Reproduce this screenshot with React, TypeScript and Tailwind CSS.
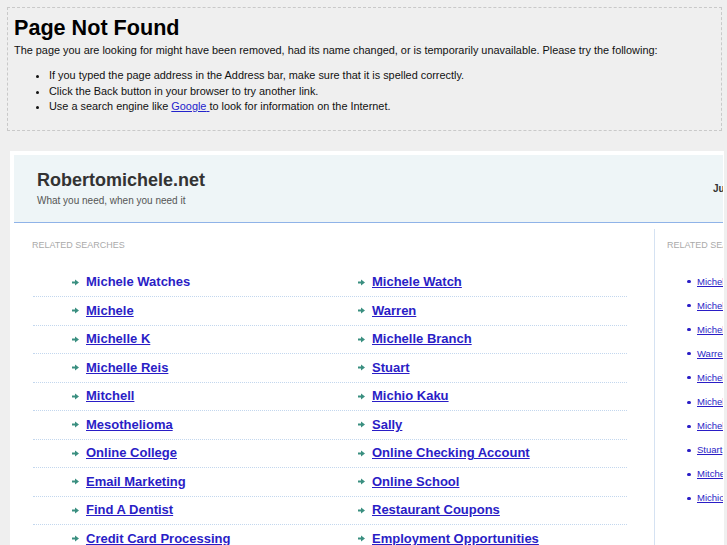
import React from "react";

const leftLinks = [
  "Michele Watches",
  "Michele",
  "Michelle K",
  "Michelle Reis",
  "Mitchell",
  "Mesothelioma",
  "Online College",
  "Email Marketing",
  "Find A Dentist",
  "Credit Card Processing",
];

const rightLinks = [
  "Michele Watch",
  "Warren",
  "Michelle Branch",
  "Stuart",
  "Michio Kaku",
  "Sally",
  "Online Checking Account",
  "Online School",
  "Restaurant Coupons",
  "Employment Opportunities",
];

const sideLinks = [
  "Michele Watches",
  "Michele",
  "Michelle K",
  "Warren",
  "Michelle Reis",
  "Michele Watch",
  "Michelle Branch",
  "Stuart",
  "Mitchell",
  "Michio Kaku",
];

function Arrow() {
  return (
    <svg width="7" height="7" viewBox="0 0 7 7" className="shrink-0">
      <rect x="0" y="2.5" width="4" height="2" fill="#3a8f80" />
      <polygon points="3,0.5 7,3.5 3,6.5" fill="#3a8f80" />
    </svg>
  );
}

function Cell({ text, first }: { text: string; first?: boolean }) {
  return (
    <div className="flex w-[286px] shrink-0 items-center gap-[7px] pl-[39px]">
      <Arrow />
      <a
        href="#"
        className={
          "whitespace-nowrap text-[13px] font-bold leading-[16px] text-[#2a1dc6] " +
          (first ? "no-underline" : "underline")
        }
      >
        {text}
      </a>
    </div>
  );
}

export default function App() {
  return (
    <div className="h-screen overflow-hidden bg-[#efefef] font-['Liberation_Sans',Arial,sans-serif] text-black">
      {/* Error box */}
      <div className="mx-[7px] mt-[7px] w-[715px] border border-dashed border-[#c9c9c9] px-[6px] pb-[15px] pt-[7px]">
        <h1 className="text-[21.6px] font-bold leading-[26px]">Page Not Found</h1>
        <p className="mt-[2px] text-[10.9px] leading-[14px] text-[#111]">
          The page you are looking for might have been removed, had its name changed, or is temporarily unavailable. Please try the following:
        </p>
        <ul className="mt-[11px] list-disc pl-[35px] text-[10.9px] leading-[15.5px] text-[#111]">
          <li>If you typed the page address in the Address bar, make sure that it is spelled correctly.</li>
          <li>Click the Back button in your browser to try another link.</li>
          <li>
            Use a search engine like{" "}
            <a href="#" className="text-[#2323cc] underline">
              Google{" "}
            </a>
            to look for information on the Internet.
          </li>
        </ul>
      </div>

      {/* Parked page box */}
      <div className="ml-[10px] mt-[20px] w-[714px] bg-white pl-[4px] pr-[1px] pt-[4px]">
        <div className="w-[709px] overflow-hidden">
          <div className="w-[960px]">
            {/* Header */}
            <div className="flex h-[68px] items-center border-b border-[#8fb3e8] bg-[#eef5f7] pl-[23px]">
              <div className="w-[676px] shrink-0">
                <div className="text-[18px] font-bold leading-[22px] text-[#333]">Robertomichele.net</div>
                <div className="mt-[3px] text-[10px] leading-[14px] text-[#555]">What you need, when you need it</div>
              </div>
              <div className="whitespace-nowrap text-[10px] font-bold text-[#333]">June 2011</div>
            </div>

            {/* Body */}
            <div className="flex h-[400px]">
              {/* Main column */}
              <div className="w-[640px] shrink-0 pl-[18px] pt-[16px]">
                <div className="text-[9px] leading-[12px] text-[#aaaaaa]">RELATED SEARCHES</div>
                <div className="ml-[1px] mt-[18px] w-[594px]">
                  {leftLinks.map((l, i) => (
                    <div
                      key={l}
                      className="flex h-[28.5px] items-center border-b border-dotted border-[#c3d7ee]"
                    >
                      <Cell text={l} first={i === 0} />
                      <Cell text={rightLinks[i]} />
                    </div>
                  ))}
                </div>
              </div>

              {/* Sidebar */}
              <div className="mt-[6px] w-[300px] shrink-0 border-l border-[#d5e2f2] pl-[12px] pt-[10px]">
                <div className="whitespace-nowrap text-[9px] leading-[12px] text-[#aaaaaa]">RELATED SEARCHES</div>
                <div className="mt-[19px]">
                  {sideLinks.map((l) => (
                    <div key={l} className="flex h-[24.1px] items-center pl-[20px]">
                      <span className="mr-[6px] h-[3px] w-[4px] rounded-full bg-[#2a1dc6]" />
                      <a href="#" className="whitespace-nowrap text-[9.5px] leading-[12px] text-[#2a1dc6] underline">
                        {l}
                      </a>
                    </div>
                  ))}
                </div>
              </div>
            </div>
          </div>
        </div>
      </div>
    </div>
  );
}
